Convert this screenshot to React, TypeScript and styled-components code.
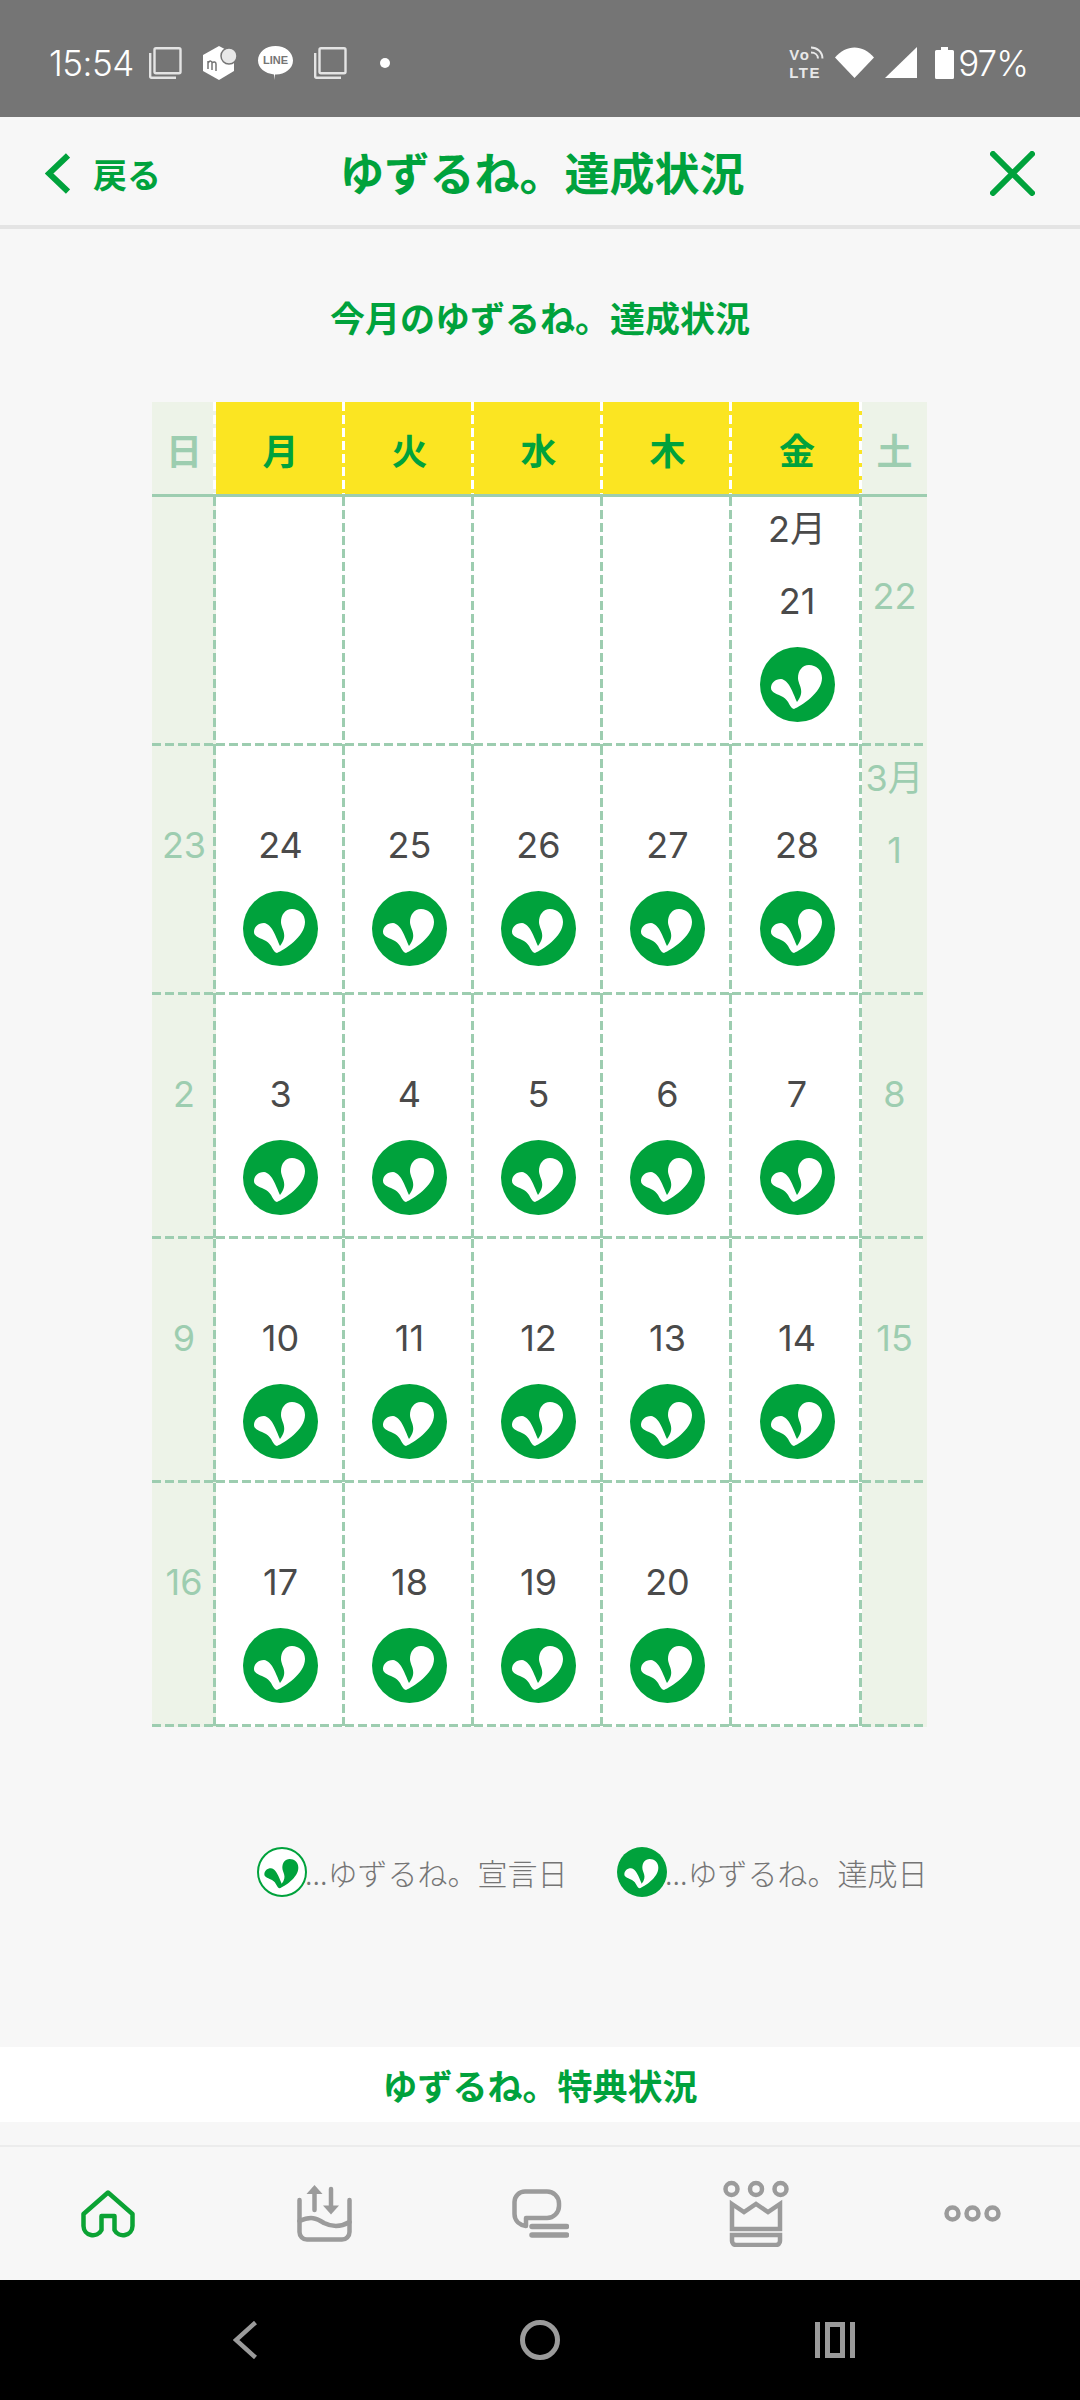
import { createGlobalStyle, styled } from "styled-components";

const GREEN = "#00a23c";
const LINE = "#9dcdb0";
const GREY = "#9b9b9b";
const CJK = `"Noto Sans CJK JP", "Noto Sans", sans-serif`;

const GlobalStyle = createGlobalStyle`
  html, body {
    margin: 0;
    padding: 0;
  }
  body {
    font-family: ${CJK};
    background: #f7f7f7;
  }
`;

const dashV = (color: string) => `repeating-linear-gradient(to bottom, ${color} 0 9px, transparent 9px 13px)`;
const dashH = `repeating-linear-gradient(to right, ${LINE} 0 9px, transparent 9px 13px)`;

type Day = { label?: string; month?: string; done?: boolean };

const WEEKDAYS = ["日", "月", "火", "水", "木", "金", "土"];

const d = (label: string, done = true, month?: string): Day => ({ label, done, month });
const off = (label?: string, month?: string): Day => ({ label, month });

const ROWS: { height: number; days: Day[] }[] = [
  { height: 249, days: [off(), off(), off(), off(), off(), d("21", true, "2月"), off("22")] },
  { height: 249, days: [off("23"), d("24"), d("25"), d("26"), d("27"), d("28"), off("1", "3月")] },
  { height: 244, days: [off("2"), d("3"), d("4"), d("5"), d("6"), d("7"), off("8")] },
  { height: 244, days: [off("9"), d("10"), d("11"), d("12"), d("13"), d("14"), off("15")] },
  { height: 244, days: [off("16"), d("17"), d("18"), d("19"), d("20"), off(), off()] },
];

function Sprout({ size, outlined }: { size: number; outlined?: boolean }) {
  return (
    <svg width={size} height={size} viewBox="0 0 75 75">
      <circle
        cx="37.5"
        cy="37.5"
        r={outlined ? 36 : 37.5}
        fill={outlined ? "#fff" : GREEN}
        stroke={outlined ? GREEN : "none"}
        strokeWidth="3"
      />
      <path
        d="M34 62C41 59 62 46 62 31C62 23 56 18 49 18C42 18 38 24 38 31C38 38 46 44 37 55C33 46 29 33 21 32C15 32 11 36 11 41C11 46 18 47 23 50C29 53 30 62 34 62Z"
        fill={outlined ? GREEN : "#fff"}
      />
    </svg>
  );
}

function CopyIcon() {
  return (
    <svg width="33" height="32" viewBox="0 0 33 32" fill="none" stroke="#e4e4e4" strokeWidth="2.4">
      <rect x="5.5" y="1.2" width="26" height="25" rx="1.5" />
      <path d="M1.2 6v23.500a1.200 1.200 0 0 0 1.200 1.300H27" />
    </svg>
  );
}

function MercariIcon() {
  return (
    <svg width="34" height="34" viewBox="0 0 34 34">
      <path d="M16 0L31 8V25L16 34L0 25V9Z" fill="#fff" />
      <circle cx="26" cy="10" r="8" fill="#e8e8e8" stroke="#757575" strokeWidth="1.5" />
      <path d="M5 23V15M5 17C7 14 9 15 9 17V24M9 17C11 15 13 16 13 18V25" fill="none" stroke="#757575" strokeWidth="1.5" />
    </svg>
  );
}

function LineIcon() {
  return (
    <svg width="35" height="34" viewBox="0 0 35 34">
      <path d="M17.500 0C27 0 35 6 35 14.500C35 23 26 29 17 28.500L16 34L16 28.400C7 27.500 0 22 0 14.500C0 6 8 0 17.500 0Z" fill="#fff" />
      <text x="17.5" y="18" textAnchor="middle" fontSize="11" fontWeight="700" fontFamily="Liberation Sans, sans-serif" fill="#757575">
        LINE
      </text>
    </svg>
  );
}

function VoArcs() {
  return (
    <svg width="13" height="13" viewBox="0 0 13 13" fill="none" stroke="#e8e8e8" strokeWidth="2">
      <path d="M0 1.500C6 1.500 11.500 6 11.500 12.500" />
      <path d="M0 6.500C4 6.500 7 9 7 12.500" />
    </svg>
  );
}

function WifiIcon() {
  return (
    <svg width="39" height="31" viewBox="0 0 39 31">
      <path d="M0 10.500C11 -3 28 -3 39 10.500L19.500 31Z" fill="#fff" />
    </svg>
  );
}

function SignalIcon() {
  return (
    <svg width="32" height="31" viewBox="0 0 32 31">
      <path d="M32 0V31H0Z" fill="#fff" />
    </svg>
  );
}

function BatteryIcon() {
  return (
    <svg width="19" height="32" viewBox="0 0 19 32">
      <path d="M6 0H13V3H17.500A1.500 1.500 0 0 1 19 4.500V30.500A1.500 1.500 0 0 1 17.500 32H1.500A1.500 1.500 0 0 1 0 30.500V4.500A1.500 1.500 0 0 1 1.500 3H6Z" fill="#fff" />
    </svg>
  );
}

function BackChevron() {
  return (
    <svg width="25" height="41" viewBox="0 0 25 41" fill="none" stroke={GREEN} strokeWidth="6">
      <path d="M23 2.500L4 20.500L23 38.500" />
    </svg>
  );
}

function CloseIcon() {
  return (
    <svg width="45" height="45" viewBox="0 0 45 45" fill="none" stroke={GREEN} strokeWidth="6" strokeLinecap="round">
      <path d="M3 3L42 42M42 3L3 42" />
    </svg>
  );
}

function HomeIcon() {
  return (
    <svg width="54" height="48" viewBox="0 0 54 48" fill="none" stroke="#0ba334" strokeWidth="4.500" strokeLinejoin="round">
      <path d="M27 2.500L51.500 24V36A9.500 9.500 0 0 1 33.500 40V26H20.500V40A9.500 9.500 0 0 1 2.500 36V24Z" />
    </svg>
  );
}

function TrayIcon() {
  return (
    <svg width="55" height="57" viewBox="0 0 55 57" fill="none" stroke={GREY} strokeWidth="4.500" strokeLinecap="round">
      <path d="M2.500 15V47A7.500 7.500 0 0 0 10 54.500H45A7.500 7.500 0 0 0 52.500 47V15" />
      <path d="M2.500 36C14 31 19 33 27 38C35 42 44 42 52.500 37" />
      <path d="M17.500 25V4" />
      <path d="M34 4V24" />
      <path d="M17.500 0L25.500 9H9.500Z" fill={GREY} stroke="none" />
      <path d="M34 29.500L42 20.500H26Z" fill={GREY} stroke="none" />
    </svg>
  );
}

function ChatIcon() {
  return (
    <svg width="57" height="49" viewBox="0 0 57 49" fill="none" stroke={GREY} strokeWidth="4.500" strokeLinecap="round">
      <path d="M13 2.500H35A12 12 0 0 1 47 14.500V17A12 12 0 0 1 35 29H14V37C8 36 2.500 32 2.500 25V13A10.500 10.500 0 0 1 13 2.500Z" strokeLinejoin="round" />
      <path d="M20 37.500H54.500M20 46H54.500" strokeWidth="5.500" />
    </svg>
  );
}

function CrownIcon() {
  return (
    <svg width="66" height="67" viewBox="0 0 66 67" fill="none" stroke={GREY} strokeWidth="4.500">
      <circle cx="8.500" cy="9" r="6" />
      <circle cx="33" cy="9" r="6" />
      <circle cx="57.500" cy="9" r="6" />
      <path d="M9 24L21 32L33 24L45 32L57 24V49H9Z" />
      <path d="M9 55H57V61A4 4 0 0 1 53 65H13A4 4 0 0 1 9 61Z" />
    </svg>
  );
}

function MoreIcon() {
  return (
    <svg width="57" height="17" viewBox="0 0 57 17" fill="none" stroke={GREY} strokeWidth="4.500">
      <circle cx="8.500" cy="8.500" r="6" />
      <circle cx="28.500" cy="8.500" r="6" />
      <circle cx="48.500" cy="8.500" r="6" />
    </svg>
  );
}

function NavBackIcon() {
  return (
    <svg width="24" height="38" viewBox="0 0 24 38" fill="none" stroke={GREY} strokeWidth="4.500">
      <path d="M22.500 1.500L3 19L22.500 36.500" />
    </svg>
  );
}

function NavHomeIcon() {
  return (
    <svg width="40" height="40" viewBox="0 0 40 40" fill="none" stroke={GREY} strokeWidth="5">
      <circle cx="20" cy="20" r="17.500" />
    </svg>
  );
}

function NavRecentsIcon() {
  return (
    <svg width="40" height="36" viewBox="0 0 40 36" fill="none" stroke={GREY} strokeWidth="5">
      <path d="M2.500 0V36M37.500 0V36" />
      <rect x="12.500" y="2.500" width="15" height="31" />
    </svg>
  );
}

export default function App() {
  return (
    <Page>
      <GlobalStyle />
      <StatusBar>
        <StatusLeft>
          <Clock>15:54</Clock>
          <CopyIcon />
          <MercariIcon />
          <LineIcon />
          <CopyIcon />
          <Dot />
        </StatusLeft>
        <StatusRight>
          <VoLte>
            <VoLine>
              Vo
              <VoArcs />
            </VoLine>
            <span>LTE</span>
          </VoLte>
          <WifiIcon />
          <SignalIcon />
          <BatterySlot>
            <BatteryIcon />
          </BatterySlot>
          <Percent>97%</Percent>
        </StatusRight>
      </StatusBar>

      <Header>
        <BackLink>
          <BackChevron />
          <span>戻る</span>
        </BackLink>
        <Title>ゆずるね。達成状況</Title>
        <CloseButton>
          <CloseIcon />
        </CloseButton>
      </Header>

      <Main>
        <Subtitle>今月のゆずるね。達成状況</Subtitle>
        <Calendar>
          <WeekRow>
            {WEEKDAYS.map((w, i) => (
              <WeekCell key={w} $off={i === 0 || i === 6}>
                {w}
              </WeekCell>
            ))}
          </WeekRow>
          {ROWS.map((row, r) => (
            <DayRow key={r} style={{ height: row.height }}>
              {row.days.map((day, c) => (
                <DayCell key={c} $off={c === 0 || c === 6} $month={!!day.month}>
                  {day.month && <MonthLabel>{day.month}</MonthLabel>}
                  {day.label && <DayNumber>{day.label}</DayNumber>}
                  {day.done && (
                    <StampSlot>
                      <Sprout size={75} />
                    </StampSlot>
                  )}
                </DayCell>
              ))}
            </DayRow>
          ))}
        </Calendar>

        <Legend>
          <LegendItem>
            <Sprout size={50} outlined />
            <span>...ゆずるね。宣言日</span>
          </LegendItem>
          <LegendItem>
            <Sprout size={50} />
            <span>...ゆずるね。達成日</span>
          </LegendItem>
        </Legend>
      </Main>

      <PerkBand>ゆずるね。特典状況</PerkBand>

      <TabBar>
        <Tab><HomeIcon /></Tab>
        <Tab><TrayIcon /></Tab>
        <Tab><ChatIcon /></Tab>
        <Tab><CrownIcon /></Tab>
        <Tab><MoreIcon /></Tab>
      </TabBar>

      <NavBar>
        <NavBackIcon />
        <NavHomeIcon />
        <NavRecentsIcon />
      </NavBar>
    </Page>
  );
}

const Page = styled.div`
  width: 1080px;
  height: 2400px;
  display: flex;
  flex-direction: column;
  background: #f7f7f7;
  overflow: hidden;
`;

const StatusBar = styled.div`
  height: 117px;
  flex-shrink: 0;
  background: #757575;
  color: #fff;
  display: flex;
  justify-content: space-between;
  align-items: flex-start;
  padding: 46px 52px 0 49px;
  box-sizing: border-box;
`;

const StatusLeft = styled.div`
  display: flex;
  align-items: center;
  gap: 21px;
  height: 33px;
`;

const Clock = styled.span`
  font-family: "Inter", sans-serif;
  font-weight: 300;
  font-size: 35px;
  width: 79px;
  letter-spacing: -0.5px;
`;

const Dot = styled.span`
  width: 10px;
  height: 10px;
  border-radius: 50%;
  background: #fff;
  margin-left: 12px;
`;

const StatusRight = styled.div`
  display: flex;
  align-items: center;
  gap: 11px;
  height: 33px;
`;

const VoLte = styled.div`
  display: flex;
  flex-direction: column;
  width: 35px;
  padding-top: 3px;
  font-family: "Liberation Sans", sans-serif;
  font-size: 15px;
  line-height: 18px;
  font-weight: 700;
  letter-spacing: 1.5px;
  color: #e8e8e8;
`;

const VoLine = styled.div`
  display: flex;
  align-items: flex-start;
  gap: 1px;
`;

const BatterySlot = styled.div`
  display: flex;
  margin-left: 7px;
`;

const Percent = styled.span`
  font-family: "Inter", sans-serif;
  font-weight: 300;
  font-size: 35px;
  margin-left: -7px;
  letter-spacing: -1px;
`;

const Header = styled.header`
  height: 112px;
  flex-shrink: 0;
  box-sizing: border-box;
  border-bottom: 4px solid #e4e4e4;
  padding-left: 4px;
  display: flex;
  align-items: center;
  justify-content: center;
  position: relative;
  color: ${GREEN};
`;

const BackLink = styled.div`
  position: absolute;
  left: 45px;
  top: 36px;
  display: flex;
  align-items: center;
  gap: 23px;
  font-size: 34px;
  font-weight: 700;
  line-height: 41px;
`;

const Title = styled.h1`
  margin: 0;
  font-size: 45px;
  font-weight: 700;
`;

const CloseButton = styled.div`
  position: absolute;
  left: 990px;
  top: 34px;
  display: flex;
`;

const Main = styled.main`
  flex: 1;
  display: flex;
  flex-direction: column;
  align-items: center;
`;

const Subtitle = styled.h2`
  margin: 59px 0 0;
  font-size: 35px;
  line-height: 58px;
  font-weight: 700;
  color: ${GREEN};
`;

const Calendar = styled.div`
  margin: 56px 1px 0 0;
  width: 775px;
  display: flex;
  flex-direction: column;
`;

const COLUMNS = "64px repeat(4, 129px) 130px 65px";

const WeekRow = styled.div`
  display: grid;
  grid-template-columns: ${COLUMNS};
  height: 95px;
  border-bottom: 3px solid ${LINE};
  box-sizing: border-box;
`;

const WeekCell = styled.div<{ $off: boolean }>`
  display: flex;
  align-items: center;
  justify-content: center;
  padding-top: 2px;
  font-size: 36px;
  font-weight: 700;
  background-color: ${(p) => (p.$off ? "#edf3e8" : "#fbe522")};
  color: ${(p) => (p.$off ? LINE : GREEN)};
  background-image: ${dashV("#fff")};
  background-repeat: no-repeat;
  background-size: 3px 100%;
  background-position: right top;
  &:last-child {
    background-image: none;
  }
`;

const DayRow = styled.div`
  display: grid;
  grid-template-columns: ${COLUMNS};
`;

const DayCell = styled.div<{ $off: boolean; $month: boolean }>`
  box-sizing: border-box;
  padding-top: ${(p) => (p.$month ? 0 : 65)}px;
  display: flex;
  flex-direction: column;
  align-items: center;
  font-family: "Inter", ${CJK};
  font-size: 36px;
  color: ${(p) => (p.$off ? LINE : "#4a4a4a")};
  background-color: ${(p) => (p.$off ? "#edf3e8" : "#fff")};
  background-image: ${dashV(LINE)}, ${dashH};
  background-repeat: no-repeat;
  background-size: 3px 100%, 100% 3px;
  background-position: right top, left bottom;
  &:last-child {
    background-image: ${dashH};
    background-size: 100% 3px;
    background-position: left bottom;
  }
`;

const MonthLabel = styled.div`
  height: 70px;
  line-height: 64px;
`;

const DayNumber = styled.div`
  height: 68px;
  line-height: 68px;
`;

const StampSlot = styled.div`
  margin-top: 12px;
  display: flex;
`;

const Legend = styled.div`
  width: 775px;
  margin-top: 120px;
  display: flex;
  justify-content: flex-end;
  gap: 49px;
`;

const LegendItem = styled.div`
  display: flex;
  align-items: center;
  font-size: 30px;
  font-weight: 300;
  color: #757575;
  span {
    margin-left: -1.5px;
  }
`;

const PerkBand = styled.div`
  height: 75px;
  flex-shrink: 0;
  background: #fff;
  color: ${GREEN};
  font-size: 35px;
  font-weight: 700;
  display: flex;
  align-items: center;
  justify-content: center;
  margin-bottom: 23px;
`;

const TabBar = styled.nav`
  height: 135px;
  flex-shrink: 0;
  box-sizing: border-box;
  border-top: 2px solid #ececec;
  display: grid;
  grid-template-columns: repeat(5, 1fr);
`;

const Tab = styled.div`
  display: flex;
  align-items: center;
  justify-content: center;
`;

const NavBar = styled.div`
  height: 120px;
  flex-shrink: 0;
  box-sizing: border-box;
  background: #000;
  display: grid;
  grid-template-columns: repeat(3, 295px);
  justify-items: center;
  align-items: center;
  padding: 0 97px;
`;
